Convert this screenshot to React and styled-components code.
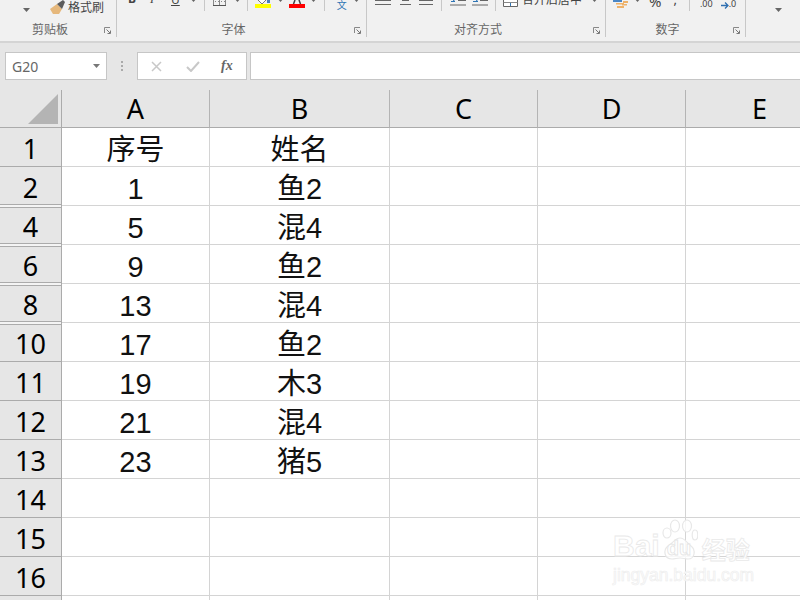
import styled, { createGlobalStyle } from "styled-components";

const GlobalStyle = createGlobalStyle`
  html, body {
    margin: 0;
    padding: 0;
    background: #fff;
  }
`;

const uiFont = `"Noto Sans", "Noto Sans CJK SC", sans-serif`;

const Page = styled.div`
  position: relative;
  width: 800px;
  height: 600px;
  overflow: hidden;
  background: #fff;
  font-family: ${uiFont};
`;

/* ribbon */
const Ribbon = styled.div`
  display: flex;
  height: 41px;
  box-sizing: border-box;
  padding-bottom: 4px;
  background: #f1f1f1;
`;

const Group = styled.div`
  display: flex;
  flex-direction: column;
  flex: none;
  box-sizing: border-box;
  width: ${(p) => p.$w}px;
  height: 37px;
  border-right: ${(p) => (p.$last ? "none" : "1px solid #c8c8c8")};
`;

const ToolRow = styled.div`
  display: flex;
  align-items: flex-start;
  height: 23px;
  overflow: hidden;
`;

const LabelRow = styled.div`
  display: flex;
  align-items: center;
  height: 14px;
`;

const GroupLabel = styled.div`
  flex: 1;
  text-align: center;
  font-size: 12px;
  line-height: 14px;
  color: #666;
`;

const Launcher = styled.div`
  display: flex;
  flex: none;
  width: 16px;
  padding-left: 4px;
  box-sizing: border-box;
`;

const Icon = styled.svg`
  display: block;
  flex: none;
  margin-left: ${(p) => p.$ml || 0}px;
  margin-top: ${(p) => p.$mt || 0}px;
`;

const ToolSep = styled.div`
  flex: none;
  width: 1px;
  height: 11px;
  margin-left: ${(p) => p.$ml}px;
  background: #c8c8c8;
`;

const ToolText = styled.div`
  flex: none;
  margin-left: ${(p) => p.$ml || 0}px;
  margin-top: ${(p) => p.$mt || 0}px;
  font-family: ${(p) => (p.$serif ? `"Liberation Serif", serif` : uiFont)};
  font-size: ${(p) => p.$size || 12}px;
  font-weight: ${(p) => (p.$bold ? 700 : 400)};
  font-style: ${(p) => (p.$italic ? "italic" : "normal")};
  text-decoration: ${(p) => (p.$under ? "underline" : "none")};
  line-height: 14px;
  color: ${(p) => p.$color || "#444"};
  white-space: nowrap;
`;

const Caret = ({ ml, mt = -2 }) => (
  <Icon $ml={ml} $mt={mt} width="7" height="4" viewBox="0 0 7 4">
    <path d="M0 0h7L3.500 4z" fill="#666" />
  </Icon>
);

const LauncherIcon = () => (
  <svg width="7" height="7" viewBox="0 0 7 7">
    <path d="M.5 6V.5H6" fill="none" stroke="#888" />
    <path d="M2.500 2.500L6 6M3.500 6.500h3v-3" fill="none" stroke="#777" />
  </svg>
);

const BrushIcon = () => (
  <Icon $ml={20} width="16" height="14" viewBox="0 0 16 14">
    <path d="M0 9l7-5 5 5-3 5H3z" fill="#e6b87c" />
    <path d="M7 4l6-4 2 2-3 7z" fill="#5c5c5c" />
  </Icon>
);

const BorderIcon = () => (
  <Icon $ml={8} width="13" height="6" viewBox="0 0 13 6">
    <path d="M0 5.500h13" stroke="#555" />
    <path d="M2 1.500h1M5 1.500h1M8 1.500h1M11 1.500h1M.5 0v5M12.500 0v5M6.500 0v5" stroke="#888" />
  </Icon>
);

const FillIcon = () => (
  <Icon $ml={7} width="16" height="8" viewBox="0 0 16 8">
    <path d="M3 0l4 4 4-4" fill="#fff" stroke="#777" />
    <path d="M12 0h3v3h-3z" fill="#4a7ebb" />
    <path d="M0 4h16v4H0z" fill="#ffff00" />
  </Icon>
);

const FontColorIcon = () => (
  <Icon $ml={5} width="16" height="8" viewBox="0 0 16 8">
    <path d="M4.500 4L6 0M11.500 4L10 0" stroke="#444" strokeWidth="1.500" />
    <path d="M0 4h16v4H0z" fill="#ff0000" />
  </Icon>
);

const LinesIcon = ({ ml, w, short }) => (
  <Icon $ml={ml} width={w} height="6" viewBox={`0 0 ${w} 6`}>
    <path d={`M${short ? 2 : 0} 0.500h${short ? w - 4 : w}M0 4.500h${w}`} stroke="#666" />
  </Icon>
);

const IndentIcon = ({ ml, flip }) => (
  <Icon $ml={ml} width="16" height="6" viewBox="0 0 16 6">
    <path d={flip ? "M1 1.500h5" : "M1 1.500h4L3 0"} stroke="#2f75b5" fill="none" />
    <path d="M8 .5h8M0 5h16" stroke="#666" />
    {flip && <path d="M4 0l2 1.500" stroke="#2f75b5" />}
  </Icon>
);

const MergeIcon = () => (
  <Icon $ml={7} width="15" height="7" viewBox="0 0 15 7">
    <path d="M.5 0v6.500h14V0" fill="#fff" stroke="#666" />
    <path d="M.5 2.500h14" stroke="#888" />
    <path d="M7.500 3v3" stroke="#2f75b5" />
  </Icon>
);

const CoinsIcon = () => (
  <Icon $ml={7} width="15" height="8" viewBox="0 0 15 8">
    <path d="M0 0h9v2H0z" fill="#4a86c5" />
    <path d="M10 1h5v2h-5zM9 4h5v1.500H9zM3 3h8v1.500H3zM4 6h7v2H4z" fill="#eeb26a" />
  </Icon>
);

const ArrowIcon = () => (
  <Icon $ml={8} $mt={2} width="8" height="7" viewBox="0 0 8 7">
    <path d="M0 3.500h7M4 .5l3 3-3 3" fill="none" stroke="#2f6fb0" strokeWidth="1.300" />
  </Icon>
);

const ClipboardGroup = () => (
  <Group $w={117}>
    <ToolRow>
      <Caret ml={23} mt={8} />
      <BrushIcon />
      <ToolText $ml={2} $mt={1}>格式刷</ToolText>
    </ToolRow>
    <LabelRow>
      <GroupLabel>剪贴板</GroupLabel>
      <Launcher><LauncherIcon /></Launcher>
    </LabelRow>
  </Group>
);

const FontGroup = () => (
  <Group $w={250}>
    <ToolRow>
      <ToolText $ml={11} $mt={-8} $bold>B</ToolText>
      <ToolText $ml={14} $mt={-8} $italic $serif>I</ToolText>
      <ToolText $ml={17} $mt={-7} $under>U</ToolText>
      <Caret ml={10} />
      <ToolSep $ml={7} />
      <BorderIcon />
      <Caret ml={8} />
      <ToolSep $ml={6} />
      <FillIcon />
      <Caret ml={6} />
      <FontColorIcon />
      <Caret ml={5} />
      <ToolSep $ml={7} />
      <ToolText $ml={12} $mt={-2} $size={10} $color="#2f75b5">文</ToolText>
      <Caret ml={6} />
    </ToolRow>
    <LabelRow>
      <GroupLabel>字体</GroupLabel>
      <Launcher><LauncherIcon /></Launcher>
    </LabelRow>
  </Group>
);

const AlignGroup = () => (
  <Group $w={239}>
    <ToolRow>
      <LinesIcon ml={8} w={16} />
      <LinesIcon ml={9} w={11} short />
      <LinesIcon ml={8} w={14} />
      <ToolSep $ml={8} />
      <IndentIcon ml={8} />
      <IndentIcon ml={6} flip />
      <ToolSep $ml={7} />
      <MergeIcon />
      <ToolText $ml={4} $mt={-7}>合并后居中</ToolText>
      <Caret ml={9} />
    </ToolRow>
    <LabelRow>
      <GroupLabel>对齐方式</GroupLabel>
      <Launcher><LauncherIcon /></Launcher>
    </LabelRow>
  </Group>
);

const NumberGroup = () => (
  <Group $w={140}>
    <ToolRow>
      <CoinsIcon />
      <Caret ml={6} />
      <ToolText $ml={8} $mt={-6} $size={15}>%</ToolText>
      <ToolText $ml={12} $mt={-8} $size={13}>,</ToolText>
      <ToolSep $ml={12} />
      <ToolText $ml={10} $mt={-3} $size={9}>.00</ToolText>
      <ArrowIcon />
      <ToolText $mt={-3} $size={9}>.0</ToolText>
    </ToolRow>
    <LabelRow>
      <GroupLabel>数字</GroupLabel>
      <Launcher><LauncherIcon /></Launcher>
    </LabelRow>
  </Group>
);

/* formula bar */
const FormulaArea = styled.div`
  display: flex;
  align-items: flex-start;
  height: 49px;
  box-sizing: border-box;
  padding: 9px 0 0 5px;
  border-top: 2px solid #d4d4d4;
  background: #e6e6e6;
`;

const NameBox = styled.div`
  display: flex;
  align-items: center;
  justify-content: space-between;
  flex: none;
  box-sizing: border-box;
  width: 102px;
  height: 28px;
  padding: 0 6px;
  background: #fff;
  border: 1px solid #c6c6c6;
  font-size: 14px;
  color: #666;
`;

const Dots = styled.div`
  flex: none;
  width: 2px;
  height: 10px;
  margin: 9px 14px 0 14px;
  background: repeating-linear-gradient(#aaa 0 2px, transparent 2px 4px);
`;

const FxBox = styled.div`
  display: flex;
  align-items: center;
  flex: none;
  box-sizing: border-box;
  width: 110px;
  height: 28px;
  padding-left: 13px;
  background: #fff;
  border: 1px solid #c6c6c6;
`;

const CheckMark = styled.svg`
  margin-left: 24px;
`;

const FxLabel = styled.span`
  margin-left: 21px;
  font-family: "Liberation Serif", serif;
  font-size: 14px;
  font-style: italic;
  font-weight: 700;
  color: #666;
`;

const FormulaInput = styled.div`
  flex: 1;
  height: 28px;
  box-sizing: border-box;
  margin-left: 3px;
  background: #fff;
  border: 1px solid #c6c6c6;
  border-right: none;
`;

/* sheet */
const Sheet = styled.div`
  display: grid;
  grid-template-columns: 62px 148px 180px 148px 148px 148px;
  grid-template-rows: 38px;
  grid-auto-rows: 39px;
`;

const Corner = styled.div`
  display: flex;
  align-items: flex-end;
  justify-content: flex-end;
  box-sizing: border-box;
  padding: 0 3px 3px 0;
  background: #e6e6e6;
  border-right: 1px solid #ababab;
  border-bottom: 1px solid #ababab;
`;

const ColHead = styled.div`
  display: flex;
  align-items: center;
  justify-content: center;
  box-sizing: border-box;
  background: #e6e6e6;
  border-right: 1px solid #b4b4b4;
  border-bottom: 1px solid #ababab;
  font-size: 27px;
  color: #000;
`;

const RowHead = styled.div`
  position: relative;
  display: flex;
  align-items: center;
  justify-content: center;
  box-sizing: border-box;
  padding-top: 2px;
  background: #e6e6e6;
  border-right: 1px solid #ababab;
  border-bottom: 1px solid #ababab;
  font-size: 27px;
  color: #000;

  ${(p) =>
    p.$hiddenAfter &&
    `
    border-bottom: none;
    &::after {
      content: "";
      position: absolute;
      z-index: 1;
      left: 0;
      right: 0;
      bottom: -2px;
      height: 4px;
      box-sizing: border-box;
      background: #f4f4f4;
      border-top: 1px solid #ababab;
      border-bottom: 1px solid #ababab;
    }
  `}
`;

const Cell = styled.div`
  display: flex;
  align-items: center;
  justify-content: center;
  box-sizing: border-box;
  padding-top: 6px;
  border-right: 1px solid #d4d4d4;
  border-bottom: 1px solid #d4d4d4;
  font-family: "Liberation Sans", "Noto Sans CJK SC", sans-serif;
  font-size: 29px;
  line-height: 32px;
  color: #111;
`;

/* baidu watermark */
const Watermark = styled.div`
  position: absolute;
  left: 613px;
  top: 519px;
  width: 145px;
`;

const MarkTop = styled.div`
  display: flex;
  align-items: flex-end;
  height: 42px;
`;

const MarkText = styled.span`
  flex: none;
  margin-left: ${(p) => p.$ml || 0}px;
  font-family: ${(p) => (p.$cjk ? `"Noto Sans CJK SC", sans-serif` : `"Liberation Sans", sans-serif`)};
  font-size: ${(p) => p.$size}px;
  font-weight: 700;
  line-height: 1;
  color: #fff;
  -webkit-text-stroke: 0.8px #e9e9e9;
`;

const MarkUrl = styled(MarkText)`
  display: block;
  margin-top: 6px;
  font-weight: 400;
  white-space: nowrap;
  color: #fcfcfc;
  -webkit-text-stroke: 0.6px #ededed;
`;

const PawBox = styled.div`
  position: relative;
  flex: none;
  width: 36px;
  height: 42px;
  margin: 0 4px 0 2px;
`;

const PawLabel = styled(MarkText)`
  position: absolute;
  left: 5px;
  bottom: 3px;
  -webkit-text-stroke: 0.8px #e4e4e4;
`;

const PawSvg = styled.svg`
  position: absolute;
  left: 0;
  top: 0;
`;

const Paw = () => (
  <PawSvg width="36" height="42" viewBox="0 0 36 42">
    <g fill="#fff" fillOpacity="0.8" stroke="#e8e8e8" strokeWidth="1.200">
      <ellipse cx="5" cy="14" rx="4" ry="5" />
      <ellipse cx="13" cy="7" rx="4.500" ry="6" />
      <ellipse cx="25" cy="7" rx="4.500" ry="6" />
      <ellipse cx="33" cy="16" rx="2.800" ry="5" />
      <path d="M18 19c5 0 7 5 11 8 5 4 4 13-3 13-3 0-5-1-8-1s-5 1-8 1c-8 0-9-9-4-13 5-3 7-8 12-8z" />
    </g>
  </PawSvg>
);

const columns = ["A", "B", "C", "D", "E"];

const rows = [
  { num: 1, a: "序号", b: "姓名" },
  { num: 2, a: "1", b: "鱼2", hiddenAfter: true },
  { num: 4, a: "5", b: "混4", hiddenAfter: true },
  { num: 6, a: "9", b: "鱼2", hiddenAfter: true },
  { num: 8, a: "13", b: "混4", hiddenAfter: true },
  { num: 10, a: "17", b: "鱼2" },
  { num: 11, a: "19", b: "木3" },
  { num: 12, a: "21", b: "混4" },
  { num: 13, a: "23", b: "猪5" },
  { num: 14 },
  { num: 15 },
  { num: 16 },
  { num: 17 },
];

function RowCells({ row }) {
  return (
    <>
      <RowHead $hiddenAfter={row.hiddenAfter}>{row.num}</RowHead>
      <Cell>{row.a}</Cell>
      <Cell>{row.b}</Cell>
      <Cell />
      <Cell />
      <Cell />
    </>
  );
}

export default function App() {
  return (
    <Page>
      <GlobalStyle />
      <Ribbon>
        <ClipboardGroup />
        <FontGroup />
        <AlignGroup />
        <NumberGroup />
        <Group $w={54} $last>
          <ToolRow>
            <Caret ml={29} mt={8} />
          </ToolRow>
        </Group>
      </Ribbon>

      <FormulaArea>
        <NameBox>
          G20
          <svg width="7" height="4" viewBox="0 0 7 4">
            <path d="M0 0h7L3.500 4z" fill="#777" />
          </svg>
        </NameBox>
        <Dots />
        <FxBox>
          <svg width="11" height="11" viewBox="0 0 11 11">
            <path d="M1 1l9 9M10 1l-9 9" stroke="#c8c8c8" strokeWidth="1.500" />
          </svg>
          <CheckMark width="14" height="11" viewBox="0 0 14 11">
            <path d="M1 6l4 4 8-9" fill="none" stroke="#c8c8c8" strokeWidth="2" />
          </CheckMark>
          <FxLabel>fx</FxLabel>
        </FxBox>
        <FormulaInput />
      </FormulaArea>

      <Sheet>
        <Corner>
          <svg width="30" height="30" viewBox="0 0 30 30">
            <path d="M30 0v30H0z" fill="#b4b4b4" />
          </svg>
        </Corner>
        {columns.map((c) => (
          <ColHead key={c}>{c}</ColHead>
        ))}
        {rows.map((r) => (
          <RowCells key={r.num} row={r} />
        ))}
      </Sheet>

      <Watermark>
        <MarkTop>
          <MarkText $size={30}>Bai</MarkText>
          <PawBox>
            <Paw />
            <PawLabel $size={20}>du</PawLabel>
          </PawBox>
          <MarkText $size={24} $cjk>经验</MarkText>
        </MarkTop>
        <MarkUrl $size={17.5}>jingyan.baidu.com</MarkUrl>
      </Watermark>
    </Page>
  );
}
